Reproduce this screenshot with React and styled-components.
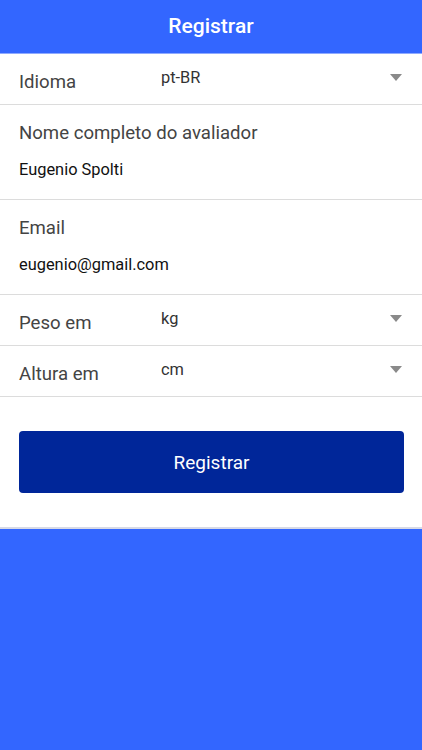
import React from 'react';
import styled, { createGlobalStyle } from 'styled-components';

const GlobalStyle = createGlobalStyle`
    html, body {
        margin: 0;
        padding: 0;
        height: 100%;
        background: #3366ff;
        font-family: Roboto, "Liberation Sans", sans-serif;
    }
    #root {
        min-height: 100%;
    }
`

const fields = [
    { type: 'select', label: 'Idioma', value: 'pt-BR' },
    { type: 'text', label: 'Nome completo do avaliador', value: 'Eugenio Spolti' },
    { type: 'text', label: 'Email', value: 'eugenio@gmail.com' },
    { type: 'select', label: 'Peso em', value: 'kg' },
    { type: 'select', label: 'Altura em', value: 'cm' },
];

const App = () => {
    return (
        <Page>
            <GlobalStyle />
            <Header>
                <Title>Registrar</Title>
            </Header>
            <Form>
                {fields.map((f) =>
                    f.type === 'select' ? (
                        <SelectRow key={f.label}>
                            <RowLabel>{f.label}</RowLabel>
                            <SelectValue>{f.value}</SelectValue>
                            <Caret />
                        </SelectRow>
                    ) : (
                        <TextGroup key={f.label}>
                            <GroupLabel>{f.label}</GroupLabel>
                            <InputValue>{f.value}</InputValue>
                        </TextGroup>
                    )
                )}
                <Actions>
                    <SubmitBtn>Registrar</SubmitBtn>
                </Actions>
            </Form>
        </Page>
    );
}

export default App;

const Page = styled.div`
    min-height: 750px;
    background: #3366ff;
`
const Header = styled.div`
    height: 53px;
    display: flex;
    justify-content: center;
    align-items: center;
    background: #3366ff;
    border-bottom: 1px solid #8faaff;
`
const Title = styled.div`
    color: #fff;
    font-size: 21px;
    font-weight: 500;
    margin-top: -1px;
`
const Form = styled.div`
    background: #fff;
    border-bottom: 2px solid #d6d9e6;
`
const SelectRow = styled.div`
    height: 51px;
    box-sizing: border-box;
    display: flex;
    align-items: center;
    padding: 0 19px;
    border-bottom: 1px solid #dcdcdc;
`
const RowLabel = styled.div`
    width: 142px;
    font-size: 18.6px;
    color: #444;
    margin-top: 6px;
`
const SelectValue = styled.div`
    flex: 1;
    font-size: 16.4px;
    color: #333;
    margin-top: -4px;
`
const Caret = styled.div`
    width: 0;
    height: 0;
    border-left: 6px solid transparent;
    border-right: 6px solid transparent;
    border-top: 7px solid #8a8a8a;
    margin-right: 1px;
    margin-top: -3px;
`
const TextGroup = styled.div`
    height: 95px;
    padding: 0 19px;
    box-sizing: border-box;
    border-bottom: 1px solid #dcdcdc;
    display: flex;
    flex-direction: column;
`
const GroupLabel = styled.div`
    font-size: 18.6px;
    color: #444;
    margin-top: 17px;
`
const InputValue = styled.div`
    font-size: 16.4px;
    color: #111;
    margin-top: 16px;
`
const Actions = styled.div`
    padding: 34px 18px 34px 19px;
`
const SubmitBtn = styled.button`
    width: 100%;
    height: 62px;
    border: none;
    border-radius: 4px;
    background: #002699;
    color: #fff;
    font-family: Roboto, "Liberation Sans", sans-serif;
    font-size: 19px;
`
